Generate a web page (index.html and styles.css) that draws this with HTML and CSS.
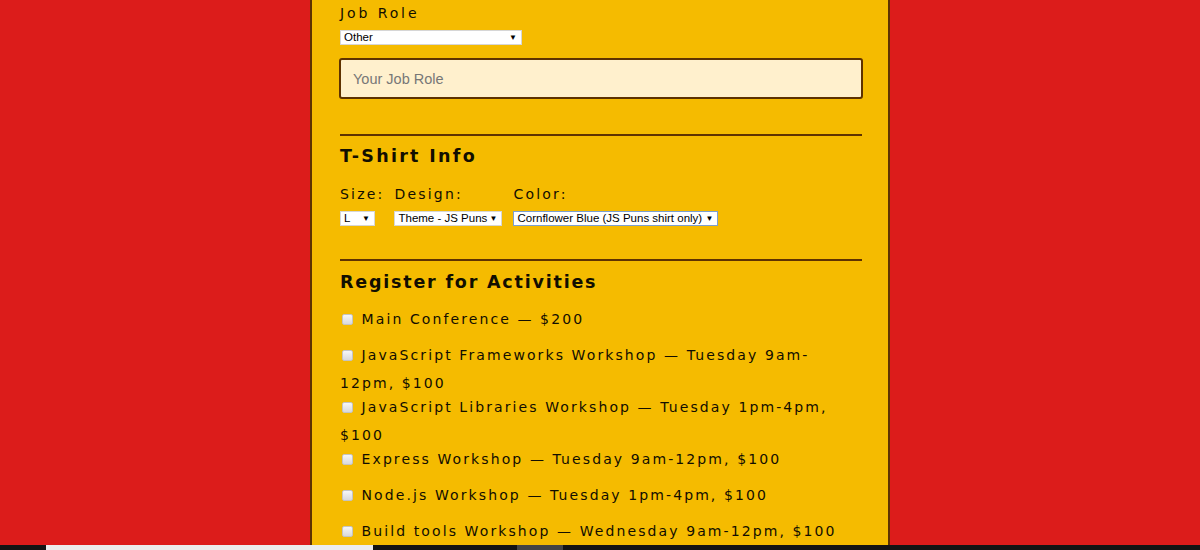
FILE: index.html
```html
<!DOCTYPE html>
<html lang="en">
<head>
<meta charset="utf-8">
<title>Registration</title>
<link rel="stylesheet" href="styles.css">
</head>
<body>
<main class="form-panel">
  <fieldset class="basic">
    <label class="field-label job-label" for="title">Job Role</label>
    <span class="select-wrap"><select id="title" class="sel sel-role"><option>Other</option></select></span>
    <input class="text-input" type="text" placeholder="Your Job Role">
  </fieldset>

  <hr class="rule rule-first">

  <fieldset class="shirt">
    <h2 class="section-title shirt-title">T-Shirt Info</h2>
    <div class="shirt-row">
      <div class="shirt-col">
        <label class="field-label">Size:</label>
        <span class="select-wrap"><select class="sel sel-size"><option>L</option></select></span>
      </div>
      <div class="shirt-col">
        <label class="field-label">Design:</label>
        <span class="select-wrap"><select class="sel sel-design"><option>Theme - JS Puns</option></select></span>
      </div>
      <div class="shirt-col">
        <label class="field-label">Color:</label>
        <span class="select-wrap"><select class="sel sel-color"><option>Cornflower Blue (JS Puns shirt only)</option></select></span>
      </div>
    </div>
  </fieldset>

  <hr class="rule rule-second">

  <fieldset class="activities">
    <h2 class="section-title">Register for Activities</h2>
    <div class="activity-list">
      <label class="activity"><input type="checkbox"> Main Conference — $200</label>
      <label class="activity"><input type="checkbox"> JavaScript Frameworks Workshop — Tuesday 9am-12pm, $100</label>
      <label class="activity"><input type="checkbox"> JavaScript Libraries Workshop — Tuesday 1pm-4pm, $100</label>
      <label class="activity"><input type="checkbox"> Express Workshop — Tuesday 9am-12pm, $100</label>
      <label class="activity"><input type="checkbox"> Node.js Workshop — Tuesday 1pm-4pm, $100</label>
      <label class="activity"><input type="checkbox"> Build tools Workshop — Wednesday 9am-12pm, $100</label>
    </div>
  </fieldset>
</main>
<div class="taskbar">
  <span class="tb-gap-a"></span>
  <span class="tb-light"></span>
  <span class="tb-gap-b"></span>
  <span class="tb-grey"></span>
</div>
</body>
</html>
```

FILE: styles.css
```css
html, body {
  margin: 0;
  padding: 0;
  height: 100%;
  overflow: hidden;
}

body {
  background: #dc1c1b;
  font-family: "DejaVu Sans", "Noto Sans", sans-serif;
  color: #120e00;
}

.form-panel {
  box-sizing: border-box;
  width: 580px;
  height: 100%;
  margin: 0 auto;
  background: #f5bb00;
  border-left: 2px solid #5e3200;
  border-right: 2px solid #5e3200;
  padding: 3px 26px 0 28px;
  overflow: hidden;
}

fieldset {
  border: 0;
  margin: 0;
  padding: 0;
  min-width: 0;
}

.field-label {
  display: block;
  font-size: 14px;
  line-height: 20px;
  letter-spacing: 2.2px;
}

.job-label {
  letter-spacing: 2.9px;
}

.select-wrap {
  position: relative;
  display: inline-block;
  vertical-align: top;
}

.select-wrap::after {
  content: "▼";
  position: absolute;
  right: 5px;
  top: 2px;
  font-family: "Liberation Sans", Arial, sans-serif;
  font-size: 8px;
  line-height: 11px;
  color: #000;
  pointer-events: none;
}

.sel {
  -webkit-appearance: none;
  appearance: none;
  box-sizing: border-box;
  display: block;
  height: 15px;
  margin: 0;
  padding: 0 0 0 3px;
  border: 1px solid #d6d6d6;
  border-radius: 0;
  background: #fff;
  font-family: "Liberation Sans", Arial, sans-serif;
  font-size: 11.5px;
  line-height: 13px;
  color: #000;
}

.basic .select-wrap {
  margin-top: 7px;
}

.sel-role { width: 182px; }
.sel-size { width: 35px; }
.sel-design { width: 108px; }
.sel-color { width: 205px; border-color: #7c9fd0; }

.text-input {
  display: block;
  box-sizing: border-box;
  width: 524px;
  height: 41px;
  margin: 13px 0 0 -1px;
  padding: 0 12px;
  background: #fff0cd;
  border: 2px solid #5e3200;
  border-radius: 3px;
  font-family: "Liberation Sans", Arial, sans-serif;
  font-size: 14.5px;
  color: #333;
}

.text-input::placeholder {
  color: #777;
}

.rule {
  height: 0;
  border: 0;
  border-top: 2px solid #5e3200;
  margin: 0;
}

.rule-first { margin-top: 35px; }
.rule-second { margin-top: 29px; }

.section-title {
  margin: 8px 0 0;
  font-size: 17.5px;
  line-height: 24px;
  font-weight: bold;
  letter-spacing: 1.8px;
}

.shirt-title {
  letter-spacing: 2.3px;
}

.activities .section-title {
  margin-top: 9px;
}

.shirt-row {
  display: flex;
  gap: 10px;
  margin-top: 16px;
}

.shirt-col:last-child {
  margin-left: 1px;
}

.shirt-col .field-label {
  margin-bottom: 7px;
}

.activity-list {
  margin-top: 17px;
}

.activity {
  display: block;
  font-size: 14px;
  line-height: 16px;
  letter-spacing: 2.1px;
  margin-bottom: 8px;
}

.activity input {
  -webkit-appearance: none;
  appearance: none;
  box-sizing: border-box;
  width: 11px;
  height: 11px;
  vertical-align: top;
  margin: 3px 2px 14px 2px;
  border: 1px solid #c4c4c4;
  border-radius: 2px;
  background: linear-gradient(#f6f6f6, #d9d9d9);
}

.taskbar {
  position: fixed;
  left: 0;
  right: 0;
  bottom: 0;
  height: 5px;
  display: flex;
  background: #141414;
}

.tb-gap-a { width: 46px; }
.tb-light { width: 327px; background: #ececec; }
.tb-gap-b { width: 144px; }
.tb-grey { width: 46px; background: #444; }
```
